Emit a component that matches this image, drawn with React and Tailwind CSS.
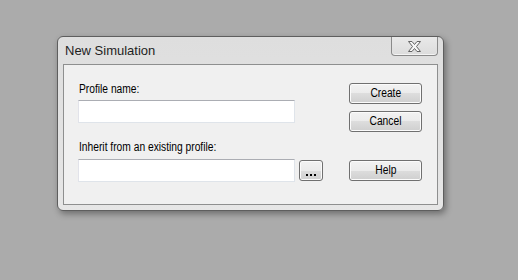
import React from "react";

function Narrow({ children, className = "" }) {
  return (
    <span className={"inline-block whitespace-nowrap scale-x-[0.82] " + className}>{children}</span>
  );
}

function WinButton({ children, className = "" }) {
  return (
    <div
      className={
        "flex items-center justify-center rounded-[3px] border border-[#707070] bg-[linear-gradient(to_bottom,#f2f2f2_0%,#ebebeb_50%,#dddddd_50%,#cfcfcf_100%)] shadow-[inset_0_0_0_1px_#fbfbfb] text-[12.5px] leading-[15px] text-black " +
        className
      }
    >
      {children}
    </div>
  );
}

function TextBox() {
  return (
    <div className="w-[217px] h-[23px] bg-white border border-[#dfe4ea] border-t-[#abadb3] border-l-[#e2e3ea]" />
  );
}

export default function App() {
  return (
    <div
      className="w-[518px] h-[280px] bg-[#ababab] pl-[57px] pt-[36px]"
      style={{ fontFamily: '"Liberation Sans", Arial, sans-serif' }}
    >
      <div className="w-[387px] h-[175px] flex flex-col rounded-[6px] border border-[#5e5e5e] bg-[linear-gradient(to_bottom,#dedede,#e6e6e6)] shadow-[2px_3px_6px_rgba(0,0,0,0.35)]">
        <div className="h-[27px] flex items-start">
          <span className="mt-[6px] pl-[7px] text-[13px] leading-[16px] text-[#1e1e1e]">
            New Simulation
          </span>
          <div className="ml-auto mr-[5px] w-[47px] h-[19px] flex items-center justify-center rounded-b-[4px] border border-t-0 border-[#8a8a8a] bg-[linear-gradient(to_bottom,#e9e9e9,#dcdcdc)] shadow-[inset_0_-1px_0_#f4f4f4]">
            <svg width="15" height="11" viewBox="0 0 15 11" className="mt-px">
              <path
                d="M1.5 0.5 H5 L7.5 3.5 L10 0.5 H13.5 L9.5 5.5 L13.5 10.5 H10 L7.5 7.5 L5 10.5 H1.5 L5.5 5.5 Z"
                fill="#f6f6f6"
                stroke="#646464"
                strokeWidth="1"
                strokeLinejoin="round"
              />
            </svg>
          </div>
        </div>
        <div className="mx-[5px] h-[141px] flex border border-[#8e8f8f] bg-[#f0f0f0]">
          <div className="pl-[14px] pt-[17px] flex flex-col">
            <div className="pl-px h-[15px] text-[12.5px] leading-[15px] text-black">
              <Narrow className="origin-left">Profile name:</Narrow>
            </div>
            <div className="mt-[3px]">
              <TextBox />
            </div>
            <div className="mt-[17px] pl-px h-[15px] text-[12.5px] leading-[15px] text-black">
              <Narrow className="origin-left">Inherit from an existing profile:</Narrow>
            </div>
            <div className="mt-[4px] flex items-start gap-[4px]">
              <TextBox />
              <WinButton className="mt-px w-[24px] h-[21px] items-end pb-[4px]">
                <div className="flex gap-[2px]">
                  <span className="w-[2px] h-[2px] bg-black" />
                  <span className="w-[2px] h-[2px] bg-black" />
                  <span className="w-[2px] h-[2px] bg-black" />
                </div>
              </WinButton>
            </div>
          </div>
          <div className="ml-auto mr-[15px] pt-[18px] flex flex-col">
            <WinButton className="w-[73px] h-[21px]">
              <Narrow>Create</Narrow>
            </WinButton>
            <WinButton className="mt-[7px] w-[73px] h-[21px]">
              <Narrow>Cancel</Narrow>
            </WinButton>
            <WinButton className="mt-[28px] w-[73px] h-[21px]">
              <Narrow>Help</Narrow>
            </WinButton>
          </div>
        </div>
      </div>
    </div>
  );
}
